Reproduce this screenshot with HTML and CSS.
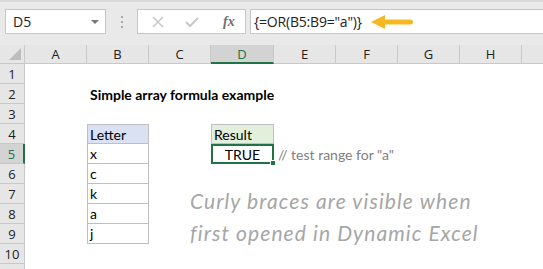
FILE: index.html
```html
<!DOCTYPE html>
<html lang="en">

<head>
    <meta charset="UTF-8">
    <title>Simple array formula example</title>
    <link rel="stylesheet" href="styles.css">
</head>

<body>
    <div class="toolbar">
        <div class="nameBox">
            <span>D5</span>
            <span class="dropArrow"></span>
        </div>
        <div class="dots">
            <span></span><span></span><span></span>
        </div>
        <div class="fxBox">
            <svg class="fxIcon" width="14" height="14" viewBox="0 0 14 14">
                <path d="M2 2 L12 12 M12 2 L2 12" stroke="#c8c8c8" stroke-width="1.6" fill="none" />
            </svg>
            <svg class="fxIcon" width="16" height="14" viewBox="0 0 16 14">
                <path d="M2 7 L6 11 L14 3" stroke="#c8c8c8" stroke-width="2" fill="none" />
            </svg>
            <span class="fx">fx</span>
        </div>
        <div class="formulaBox">
            <span class="formula">{=OR(B5:B9="a")}</span>
            <svg class="arrow" width="44" height="16" viewBox="0 0 44 16">
                <path d="M1 8 L15 1 L15 5.5 L40 5.5 Q43 5.5 43 8 Q43 10.5 40 10.5 L15 10.5 L15 15 Z" fill="#f5b820" />
            </svg>
        </div>
    </div>

    <div class="sheet">
        <div class="corner"><span class="triangle"></span></div>
        <div class="colHead">A</div>
        <div class="colHead">B</div>
        <div class="colHead">C</div>
        <div class="colHead active">D</div>
        <div class="colHead">E</div>
        <div class="colHead">F</div>
        <div class="colHead">G</div>
        <div class="colHead">H</div>
        <div class="colHead last"></div>

        <div class="rowHead r1">1</div>
        <div class="rowHead r2">2</div>
        <div class="rowHead r3">3</div>
        <div class="rowHead r4">4</div>
        <div class="rowHead r5 active">5</div>
        <div class="rowHead r6">6</div>
        <div class="rowHead r7">7</div>
        <div class="rowHead r8">8</div>
        <div class="rowHead r9">9</div>
        <div class="rowHead r10">10</div>
        <div class="rowHead r11"></div>

        <div class="title">Simple array formula example</div>

        <div class="letters">
            <div class="cell head">Letter</div>
            <div class="cell">x</div>
            <div class="cell">c</div>
            <div class="cell">k</div>
            <div class="cell">a</div>
            <div class="cell">j</div>
        </div>

        <div class="result">
            <div class="cell head">Result</div>
            <div class="cell selected">TRUE<span class="handle"></span></div>
        </div>

        <div class="comment">// test range for "a"</div>

        <div class="note">
            <div>Curly braces are visible when</div>
            <div>first opened in Dynamic Excel</div>
        </div>
    </div>
</body>

</html>
```

FILE: styles.css
```css
* {
    box-sizing: border-box;
    padding: 0;
    margin: 0;
}

body {
    width: 543px;
    height: 269px;
    overflow: hidden;
    background-color: #fff;
    font-family: "Open Sans", sans-serif;
}

/* formula bar */

.toolbar {
    height: 45px;
    background-color: #e9e9e9;
    border-top: 2px solid #dadada;
    display: flex;
    align-items: flex-start;
    padding-top: 7px;
    padding-left: 5px;
}

.nameBox {
    width: 101px;
    height: 25px;
    background-color: #fff;
    border: 1px solid #c6c6c6;
    display: flex;
    align-items: center;
    justify-content: space-between;
    padding: 0 6px 0 7px;
    font-size: 14px;
    color: #222;
}

.dropArrow {
    width: 0;
    height: 0;
    border-left: 4px solid transparent;
    border-right: 4px solid transparent;
    border-top: 4px solid #777;
}

.dots {
    width: 31px;
    height: 25px;
    display: flex;
    flex-direction: column;
    align-items: center;
    justify-content: center;
    gap: 3px;
}

.dots span {
    width: 2px;
    height: 2px;
    background-color: #a8a8a8;
}

.fxBox {
    width: 109px;
    height: 25px;
    background-color: #fff;
    border: 1px solid #c6c6c6;
    display: flex;
    align-items: center;
    padding-left: 13px;
    gap: 19px;
}

.fx {
    font-family: "Liberation Serif", serif;
    font-style: italic;
    font-weight: bold;
    font-size: 14px;
    color: #707070;
    margin-left: 4px;
}

.formulaBox {
    flex: 1;
    height: 25px;
    margin-left: 4px;
    background-color: #fff;
    border: 1px solid #c6c6c6;
    border-right: none;
    display: flex;
    align-items: center;
    padding-left: 3px;
}

.formula {
    font-size: 14px;
    color: #222;
    letter-spacing: -0.2px;
}

.arrow {
    margin-left: 8px;
}

/* grid */

.sheet {
    display: grid;
    grid-template-columns: 25px 62px 62px 62px 63px 62px 62px 62px 62px 1fr;
    grid-template-rows: 19px repeat(10, 20px) 5px;
    font-family: "Lato", sans-serif;
    font-size: 14px;
    overflow: hidden;
}

.corner {
    background-color: #e6e6e6;
    border-right: 1px solid #c8c8c8;
    border-bottom: 1px solid #c8c8c8;
    position: relative;
}

.triangle {
    position: absolute;
    right: 3px;
    bottom: 3px;
    width: 0;
    height: 0;
    border-left: 12px solid transparent;
    border-bottom: 12px solid #bdbdbd;
}

.colHead {
    background-color: #e6e6e6;
    border-right: 1px solid #c8c8c8;
    border-bottom: 1px solid #c8c8c8;
    display: flex;
    align-items: center;
    justify-content: center;
    font-family: "Open Sans", sans-serif;
    font-size: 13px;
    color: #222;
}

.colHead.active {
    background-color: #d3d3d3;
    color: #217346;
    border-bottom: 2px solid #217346;
}

.colHead.last {
    border-right: none;
}

.rowHead {
    grid-column: 1;
    background-color: #e6e6e6;
    border-right: 1px solid #c8c8c8;
    border-bottom: 1px solid #c8c8c8;
    display: flex;
    align-items: center;
    justify-content: center;
    font-family: "Open Sans", sans-serif;
    font-size: 13px;
    color: #222;
}

.rowHead.active {
    background-color: #d3d3d3;
    color: #217346;
    border-right: 2px solid #217346;
}

.r1 { grid-row: 2; }
.r2 { grid-row: 3; }
.r3 { grid-row: 4; }
.r4 { grid-row: 5; }
.r5 { grid-row: 6; }
.r6 { grid-row: 7; }
.r7 { grid-row: 8; }
.r8 { grid-row: 9; }
.r9 { grid-row: 10; }
.r10 { grid-row: 11; }
.r11 { grid-row: 12; border-bottom: none; }

.title {
    grid-column: 3 / 6;
    grid-row: 3;
    display: flex;
    align-items: center;
    padding-left: 3px;
    font-weight: bold;
    font-size: 14px;
    color: #000;
    white-space: nowrap;
}

.letters {
    grid-column: 3;
    grid-row: 5 / 11;
    display: grid;
    grid-template-rows: repeat(6, 20px);
    border-left: 1px solid #bfbfbf;
}

.result {
    grid-column: 5;
    grid-row: 5 / 7;
    display: grid;
    grid-template-rows: repeat(2, 20px);
}

.cell {
    border-right: 1px solid #bfbfbf;
    border-bottom: 1px solid #bfbfbf;
    display: flex;
    align-items: center;
    padding-left: 2px;
    color: #000;
}

.cell.head {
    border-top: 1px solid #bfbfbf;
}

.letters .head {
    background-color: #d9e1f2;
}

.result .head {
    background-color: #e2efda;
    border-left: 1px solid #bfbfbf;
}

.cell.selected {
    border: 2px solid #217346;
    justify-content: center;
    padding-left: 0;
    position: relative;
}

.handle {
    position: absolute;
    right: -4px;
    bottom: -4px;
    width: 6px;
    height: 6px;
    background-color: #217346;
    border: 1px solid #fff;
}

.comment {
    grid-column: 6 / 9;
    grid-row: 6;
    display: flex;
    align-items: center;
    padding-left: 4px;
    color: #808080;
    white-space: nowrap;
}

.note {
    grid-column: 4 / 11;
    grid-row: 8 / 12;
    padding-left: 41px;
    padding-top: 1px;
    font-style: italic;
    font-size: 21px;
    line-height: 32px;
    letter-spacing: 1.1px;
    color: #a6a6a6;
    white-space: nowrap;
}
```
